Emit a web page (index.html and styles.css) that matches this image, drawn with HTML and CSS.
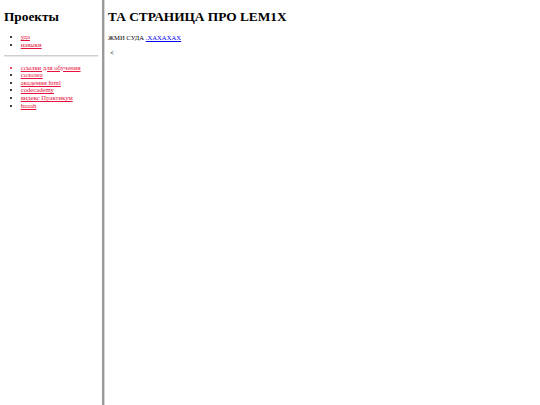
FILE: index.html
```html
<!DOCTYPE html>
<html lang="ru">
<head>
<meta charset="utf-8">
<title>LEM1X</title>
<link rel="stylesheet" href="styles.css">
</head>
<body>
<div class="page">
  <nav class="sidebar">
    <h1 class="title">Проекты</h1>
    <ul class="list">
      <li><a href="#">уда</a></li>
      <li><a href="#">навыки</a></li>
    </ul>
    <hr class="sep">
    <ul class="list">
      <li class="hot"><a href="#">ссылки для обучения</a></li>
      <li><a href="#">сололеа</a></li>
      <li><a href="#">академия html</a></li>
      <li><a href="#">codecademy</a></li>
      <li><a href="#">яндекс Практикум</a></li>
      <li><a href="#">haaah</a></li>
    </ul>
  </nav>
  <main class="content">
    <h1 class="title">ТА СТРАНИЦА ПРО LEM1X</h1>
    <p class="text">ЖМИ СУДА <a class="blue" href="#">.ХАХАХАХ</a></p>
    <p class="text lt">&lt;</p>
  </main>
</div>
</body>
</html>
```
FILE: styles.css
```css
html, body {
  margin: 0;
  padding: 0;
  background: #fff;
}
body {
  font-family: "Liberation Serif", "Times New Roman", serif;
  font-size: 6.67px;
  line-height: 7.6px;
  color: #000;
}
.page {
  display: flex;
  min-height: 405px;
}
.sidebar {
  width: 94px;
  padding: 0 4px;
  border-right: 2px solid #9a9a9a;
  box-shadow: 1px 0 0 #d8d8d8;
  min-height: 405px;
}
.content {
  flex: 1;
  padding-left: 4px;
}
.title {
  font-size: 13.33px;
  line-height: 15.3px;
  font-weight: bold;
  margin: 9px 0 8.9px;
}
.list {
  margin: 6.67px 0;
  padding-left: 16.7px;
  list-style: disc;
}
.list a {
  color: #e8103a;
  text-decoration: underline;
}
.hot {
  color: #e8103a;
}
.sep {
  margin: 3.3px 0;
  border: 0;
  border-top: 1px solid #cfcfcf;
  border-bottom: 1px solid #e8e8e8;
  height: 0;
}
.text {
  margin: 6.67px 0;
  padding-top: 1px;
}
.blue {
  color: #0000ee;
}
.lt {
  padding-left: 2px;
}
```
